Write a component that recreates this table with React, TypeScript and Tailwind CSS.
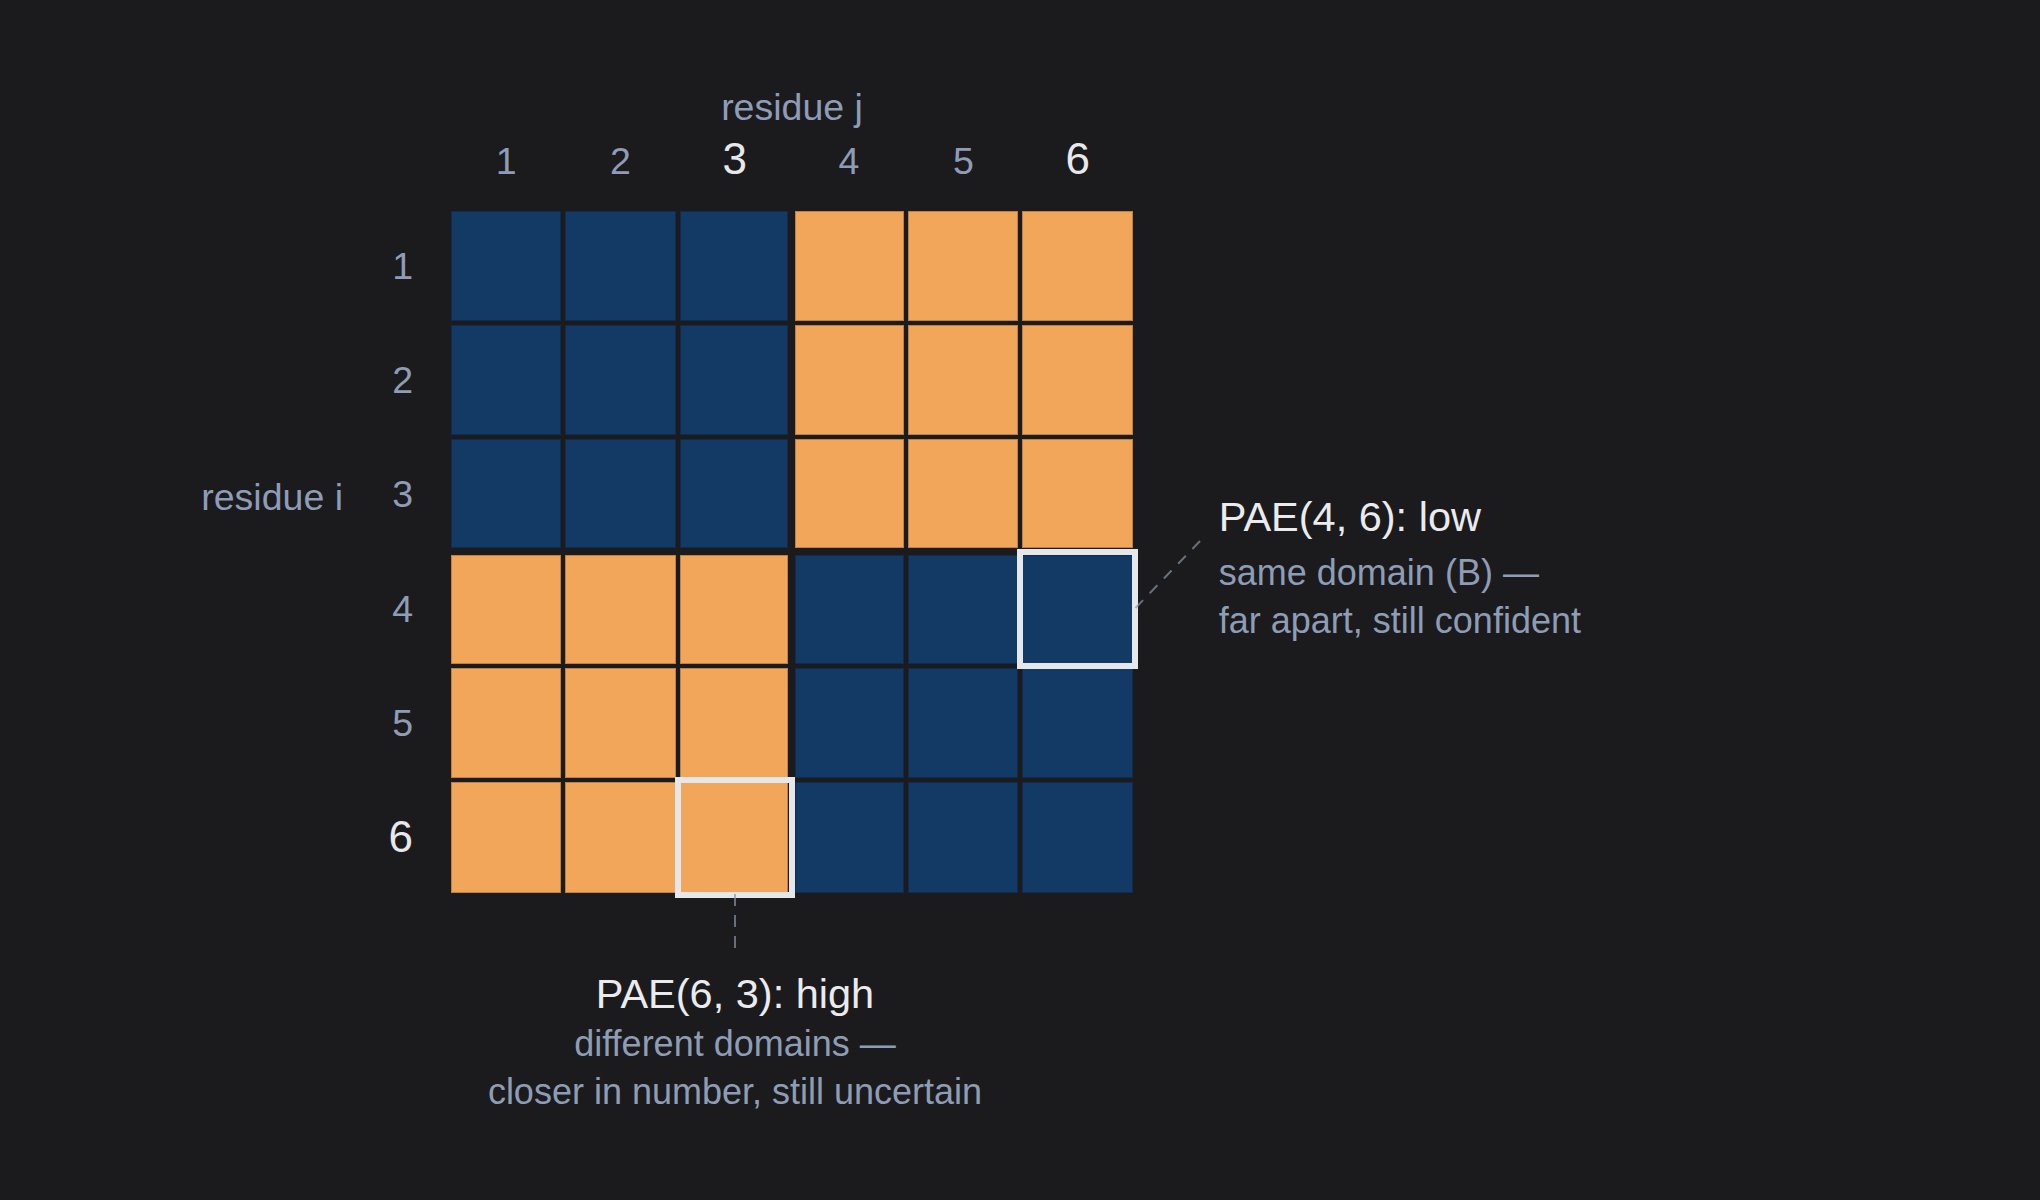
import React from "react";

const idx = [0, 1, 2, 3, 4, 5];

function Cell({ r, c }: { r: number; c: number }) {
  const same = (r < 3) === (c < 3);
  const pad = [
    c === 2 ? "pr-[1.5px]" : "",
    c === 3 ? "pl-[1.5px]" : "",
    r === 2 ? "pb-[1.5px]" : "",
    r === 3 ? "pt-[1.5px]" : "",
  ].join(" ");
  const hl = (r === 3 && c === 5) || (r === 5 && c === 2);
  return (
    <div className={`h-[110.3px] ${pad} ${hl ? "relative" : ""}`}>
      <div
        className={`h-full w-full ${same ? "bg-[#133a64]" : "bg-[#f2a65a]"} shadow-[inset_0_0_0_1px_rgba(0,0,0,0.22)]`}
      />
      {hl && <div className="absolute -inset-[5px] z-10 border-[6px] border-[#e6e7ea]" />}
    </div>
  );
}

export default function App() {
  return (
    <div className="w-[2040px] h-[1200px] overflow-hidden bg-[#1b1b1d] font-['Liberation_Sans',Arial,sans-serif] text-[#8e9db5]">
      <div className="flex flex-col pt-[83px]">
        {/* column axis title */}
        <div className="ml-[451px] w-[682px] text-center text-[37.5px] leading-[48px]">residue j</div>

        {/* column numbers */}
        <div className="ml-[451px] mt-[3.75px] grid grid-cols-[repeat(6,110.3px)] gap-x-[4px] items-baseline">
          {idx.map((c) => {
            const hi = c === 2 || c === 5;
            return (
              <div
                key={c}
                className={`text-center leading-[48px] ${hi ? "text-[44px] text-[#e8e8ea]" : "text-[37.5px]"}`}
              >
                {c + 1}
              </div>
            );
          })}
        </div>

        {/* heatmap row */}
        <div className="mt-[26px] flex items-start">
          <div className="flex w-[451px] shrink-0">
            <div className="w-[343px] pt-[262px] text-right text-[37.5px] leading-[48px] whitespace-nowrap">
              residue i
            </div>
            <div className="flex w-[70px] flex-col gap-[4px]">
              {idx.map((r) => {
                const hi = r === 5;
                return (
                  <div
                    key={r}
                    className={`flex h-[110.3px] items-center justify-end leading-[48px] ${hi ? "text-[44px] text-[#e8e8ea]" : "text-[37.5px]"}`}
                  >
                    {r + 1}
                  </div>
                );
              })}
            </div>
          </div>

          <div className="relative shrink-0">
            <div className="grid grid-cols-[repeat(6,110.3px)] gap-[4px]">
              {idx.map((r) => idx.map((c) => <Cell key={`${r}-${c}`} r={r} c={c} />))}
            </div>
            {/* right connector */}
            <svg className="absolute left-[680px] top-[325px] z-20 h-[80px] w-[75px]" viewBox="0 0 75 80">
              <line
                x1="4.5"
                y1="72"
                x2="70"
                y2="4"
                stroke="#8a93a3"
                strokeOpacity="0.7"
                strokeWidth="2"
                strokeDasharray="11 9.5"
              />
            </svg>
            {/* bottom connector */}
            <svg className="absolute left-[279px] top-[681px] z-20 h-[60px] w-[10px]" viewBox="0 0 10 60">
              <line
                x1="5"
                y1="2"
                x2="5"
                y2="56"
                stroke="#8a93a3"
                strokeOpacity="0.7"
                strokeWidth="2"
                strokeDasharray="12 9"
              />
            </svg>
          </div>

          <div className="ml-[86px] pt-[282px] whitespace-nowrap">
            <div className="text-[41.5px] leading-[48px] text-[#ebebed]">PAE(4, 6): low</div>
            <div className="mt-[8px] text-[36px] leading-[48px]">same domain (B) —</div>
            <div className="text-[36px] leading-[48px]">far apart, still confident</div>
          </div>
        </div>

        {/* bottom annotation */}
        <div className="ml-[435px] mt-[77.5px] w-[600px] text-center whitespace-nowrap">
          <div className="text-[41.5px] leading-[48px] text-[#ebebed]">PAE(6, 3): high</div>
          <div className="mt-[2px] text-[36px] leading-[48px]">different domains —</div>
          <div className="text-[36px] leading-[48px]">closer in number, still uncertain</div>
        </div>
      </div>
    </div>
  );
}
